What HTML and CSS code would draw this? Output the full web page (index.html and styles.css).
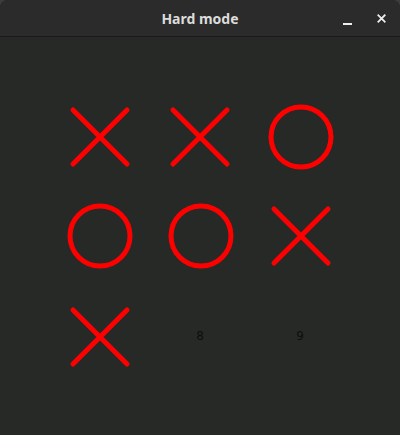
FILE: index.html
```html
<!DOCTYPE html>
<html>
<head>
<meta charset="utf-8">
<link rel="stylesheet" href="styles.css">
</head>
<body>
<div class="window">
  <header class="titlebar">
    <span class="title">Hard mode</span>
    <div class="controls">
      <span class="btn min"><span class="bar"></span></span>
      <span class="btn close">
        <svg width="10" height="10" viewBox="0 0 10 10"><path d="M1.5 1.5 L8.5 8.5 M8.5 1.5 L1.5 8.5" stroke="#eeeeec" stroke-width="2" stroke-linecap="square"/></svg>
      </span>
    </div>
  </header>
  <main class="content">
    <div class="board">
      <div class="cell"><svg class="mark" viewBox="0 0 100 100"><path d="M23 24 L77 78 M77 24 L23 78" stroke="#ff0000" stroke-width="5" stroke-linecap="round"/></svg></div>
      <div class="cell"><svg class="mark" viewBox="0 0 100 100"><path d="M23 24 L77 78 M77 24 L23 78" stroke="#ff0000" stroke-width="5" stroke-linecap="round"/></svg></div>
      <div class="cell"><svg class="mark" viewBox="0 0 100 100"><circle cx="51" cy="51" r="30" fill="none" stroke="#ff0000" stroke-width="5"/></svg></div>
      <div class="cell"><svg class="mark" viewBox="0 0 100 100"><circle cx="50" cy="50" r="30" fill="none" stroke="#ff0000" stroke-width="5"/></svg></div>
      <div class="cell"><svg class="mark" viewBox="0 0 100 100"><circle cx="51" cy="50" r="30" fill="none" stroke="#ff0000" stroke-width="5"/></svg></div>
      <div class="cell"><svg class="mark" viewBox="0 0 100 100"><path d="M24 23 L78 77 M78 23 L24 77" stroke="#ff0000" stroke-width="5" stroke-linecap="round"/></svg></div>
      <div class="cell"><svg class="mark" viewBox="0 0 100 100"><path d="M23 24 L77 78 M77 24 L23 78" stroke="#ff0000" stroke-width="5" stroke-linecap="round"/></svg></div>
      <div class="cell"><span class="num">8</span></div>
      <div class="cell"><span class="num">9</span></div>
    </div>
  </main>
</div>
</body>
</html>
```
FILE: styles.css
```css
html, body {
  margin: 0;
  padding: 0;
  background: #3c3c3c;
}
.window {
  width: 400px;
  height: 435px;
  display: flex;
  flex-direction: column;
  background: #272926;
  border-radius: 8px 8px 0 0;
  overflow: hidden;
}
.titlebar {
  height: 36px;
  flex: 0 0 36px;
  background: #2b2b2b;
  border-bottom: 1px solid #1a1a1a;
  display: flex;
  align-items: center;
  justify-content: center;
  position: relative;
  box-sizing: content-box;
}
.title {
  font-family: "Noto Sans", "DejaVu Sans", sans-serif;
  font-weight: bold;
  font-size: 14px;
  color: #dcdcdc;
  margin-top: 0px;
}
.controls {
  position: absolute;
  right: 12px;
  top: 0;
  height: 36px;
  display: flex;
  align-items: center;
  gap: 20px;
}
.btn {
  width: 14px;
  height: 14px;
  display: flex;
  align-items: center;
  justify-content: center;
}
.btn.min {
  align-items: flex-end;
}
.btn.min .bar {
  width: 9px;
  height: 2px;
  background: #eeeeec;
  margin-bottom: 0px;
}
.btn.close svg {
  width: 9px;
  height: 9px;
}
.content {
  flex: 1;
  display: flex;
  align-items: center;
  justify-content: center;
}
.board {
  display: grid;
  grid-template-columns: repeat(3, 100px);
  grid-template-rows: repeat(3, 100px);
}
.cell {
  display: flex;
  align-items: center;
  justify-content: center;
}
.mark {
  width: 100px;
  height: 100px;
}
.num {
  font-family: "DejaVu Sans", sans-serif;
  font-size: 12px;
  color: #0e0e0e;
}
```
